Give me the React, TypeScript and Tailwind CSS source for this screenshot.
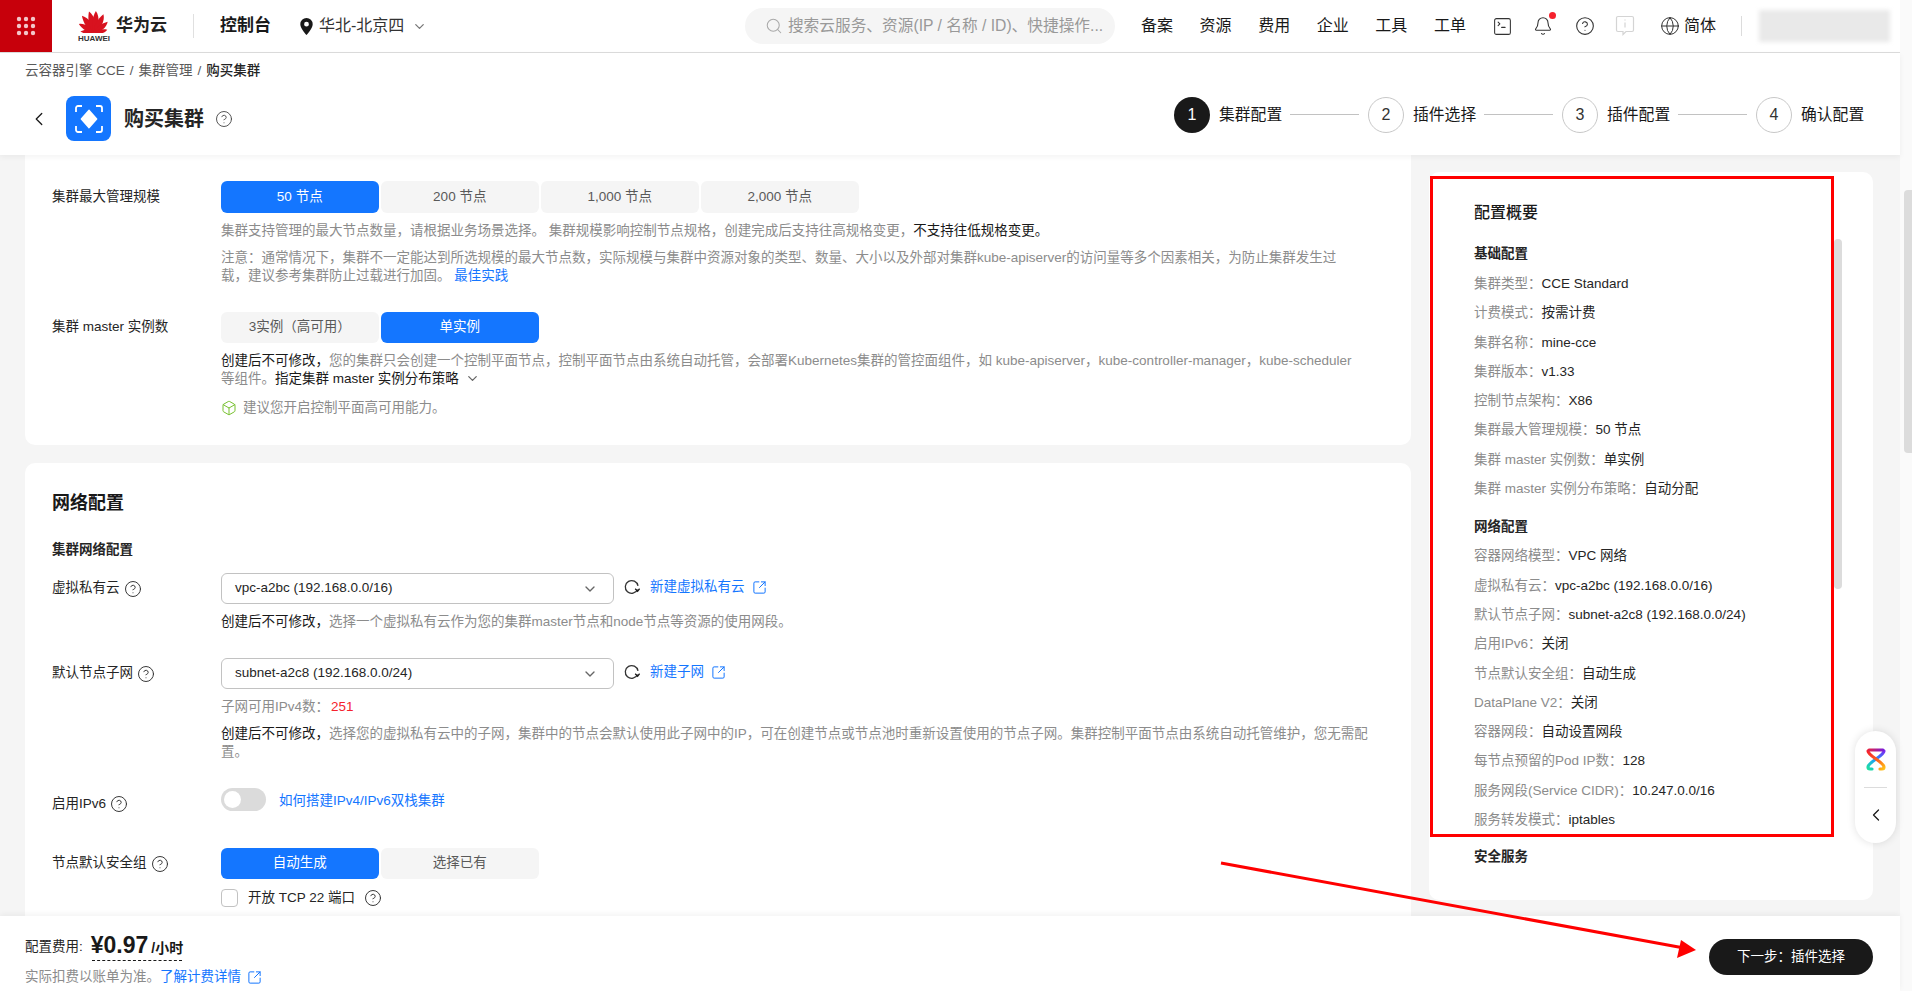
import { Bell, Box, ChevronDown, ChevronLeft, CircleHelp, Globe, Search, SquareArrowOutUpRight, SquareTerminal } from 'lucide-react';

const basicRows = [
    ['集群类型：', 'CCE Standard'],
    ['计费模式：', '按需计费'],
    ['集群名称：', 'mine-cce'],
    ['集群版本：', 'v1.33'],
    ['控制节点架构：', 'X86'],
    ['集群最大管理规模：', '50 节点'],
    ['集群 master 实例数：', '单实例'],
    ['集群 master 实例分布策略：', '自动分配'],
];

const networkRows = [
    ['容器网络模型：', 'VPC 网络'],
    ['虚拟私有云：', 'vpc-a2bc (192.168.0.0/16)'],
    ['默认节点子网：', 'subnet-a2c8 (192.168.0.0/24)'],
    ['启用IPv6：', '关闭'],
    ['节点默认安全组：', '自动生成'],
    ['DataPlane V2：', '关闭'],
    ['容器网段：', '自动设置网段'],
    ['每节点预留的Pod IP数：', '128'],
    ['服务网段(Service CIDR)：', '10.247.0.0/16'],
    ['服务转发模式：', 'iptables'],
];

const navItems = ['备案', '资源', '费用', '企业', '工具', '工单'];
const steps = ['集群配置', '插件选择', '插件配置', '确认配置'];

function HuaweiLogo() {
    const angles = [-80, -55, -31, -9, 9, 31, 55, 80];
    const lengths = [0.62, 0.8, 0.95, 1, 1, 0.95, 0.8, 0.62];
    return (
        <div className="flex w-[32px] flex-col items-center">
            <svg width="30" height="23" viewBox="-15 -23 30 23">
                {angles.map((a, i) => (
                    <path
                        key={a}
                        transform={`rotate(${a}) scale(${lengths[i]})`}
                        d="M0 0C-4.600-6-4.200-15-1.600-22C3.400-17 4.400-7 0 0Z"
                        fill="#d8121f"
                    />
                ))}
            </svg>
            <span className="mt-[1px] text-[8px] leading-[9px] font-semibold text-[#333]">HUAWEI</span>
        </div>
    );
}

function RefreshIcon() {
    return (
        <svg width="16" height="16" viewBox="0 0 16 16" fill="none" stroke="#191919" strokeWidth="1.3" className="shrink-0">
            <path d="M13.6 10.5A6.4 6.4 0 1 1 14 6.8" stroke="#333" />
            <path d="M11.2 9.8l2.4 2.4 2-2.6" />
        </svg>
    );
}

function Help({ className = '' }: { className?: string }) {
    return <CircleHelp size={18} strokeWidth={1.3} className={`shrink-0 text-[#333] ${className}`} />;
}

function Ext() {
    return <SquareArrowOutUpRight size={15} strokeWidth={1.6} className="shrink-0 text-[#1476ff]" />;
}

function Segments({ options, active, tall }: { options: string[]; active: number; tall?: boolean }) {
    return (
        <div className="flex gap-[2.5px]">
            {options.map((o, i) => (
                <div
                    key={o}
                    className={`flex w-[157.5px] items-center justify-center rounded-[6px] ${tall ? 'h-[32px]' : 'h-[31px]'} ${i === active ? 'bg-[#1476ff] text-white' : 'bg-[#f5f5f5] text-[#595959]'}`}
                >
                    {o}
                </div>
            ))}
        </div>
    );
}

function Label({ children, help, className = '' }: { children: React.ReactNode; help?: boolean; className?: string }) {
    return (
        <div className={`flex w-[169px] shrink-0 items-center text-[#252525] ${className}`}>
            <span>{children}</span>
            {help && <Help className="ml-[4px]" />}
        </div>
    );
}

function SelectBox({ value }: { value: string }) {
    return (
        <div className="flex h-[31px] w-[393px] items-center justify-between rounded-[6px] border border-[#c2c2c2] pr-[15px] pl-[13px] text-[#252525]">
            <span>{value}</span>
            <ChevronDown size={16} className="text-[#666]" />
        </div>
    );
}

function SummaryRow({ label, value }: { label: string; value: string }) {
    return (
        <div className="h-[29.3px] leading-[29.3px] whitespace-nowrap">
            <span className="text-[#8c8c8c]">{label}</span>
            <span className="text-[#252525]">{value}</span>
        </div>
    );
}

export default function App() {
    return (
        <div className="relative flex h-[991px] w-[1912px] overflow-hidden bg-white font-['Liberation_Sans','Noto_Sans_CJK_SC',sans-serif] text-[13.5px] text-[#191919]">
            <div className="flex w-[1900px] shrink-0 flex-col">
                {/* Top bar */}
                <div className="flex h-[53px] shrink-0 items-center border-b border-[#dcdcdc] bg-white">
                    <div className="flex h-[52px] w-[52px] shrink-0 items-center justify-center bg-[#c7000b]">
                        <svg width="20" height="20" viewBox="0 0 20 20" fill="#f3c6c9">
                            {[3, 10, 17].map((y) => [3, 10, 17].map((x) => <circle key={`${x}-${y}`} cx={x} cy={y} r="2.2" />))}
                        </svg>
                    </div>
                    <div className="ml-[26px]">
                        <HuaweiLogo />
                    </div>
                    <span className="ml-[6px] text-[17px] font-bold text-[#222]">华为云</span>
                    <div className="ml-[26px] h-[24px] w-px bg-[#e0e0e0]" />
                    <span className="ml-[26px] text-[17px] font-bold text-[#191919]">控制台</span>
                    <svg width="13" height="17" viewBox="0 0 13 17" className="ml-[29px] shrink-0">
                        <path fillRule="evenodd" d="M6.5 0A6.2 6.2 0 0 0 .3 6.2C.3 10.4 6.5 17 6.5 17s6.2-6.6 6.2-10.8A6.2 6.2 0 0 0 6.5 0Zm0 3.8a2.4 2.4 0 1 1 0 4.8 2.4 2.4 0 0 1 0-4.8Z" fill="#191919" />
                    </svg>
                    <span className="ml-[6px] text-[16px] text-[#333]">华北-北京四</span>
                    <ChevronDown size={15} className="ml-[8px] text-[#777]" />

                    <div className="ml-auto flex h-[36px] w-[370px] items-center overflow-hidden rounded-full bg-[#f5f5f5] pl-[20px] text-[15.7px] text-[#999]">
                        <Search size={18} strokeWidth={1.4} className="shrink-0 text-[#aaa]" />
                        <span className="ml-[5px] whitespace-nowrap">搜索云服务、资源(IP / 名称 / ID)、快捷操作...</span>
                    </div>
                    <div className="ml-[26px] flex gap-[26.6px] text-[16px] text-[#191919]">
                        {navItems.map((n) => (
                            <span key={n}>{n}</span>
                        ))}
                    </div>
                    <SquareTerminal size={21} strokeWidth={1.2} className="ml-[26px] text-[#333]" />
                    <div className="relative ml-[20px]">
                        <Bell size={20} strokeWidth={1.3} className="text-[#333]" />
                        <span className="absolute -top-[4px] -right-[3px] h-[7px] w-[7px] rounded-full bg-[#f5222d]" />
                    </div>
                    <CircleHelp size={20} strokeWidth={1.3} className="ml-[22px] text-[#333]" />
                    <svg width="20" height="22" viewBox="0 0 20 22" fill="none" stroke="#d4d4d4" strokeWidth="1.2" className="ml-[20px] shrink-0">
                        <path d="M3 1.5h14a1.5 1.5 0 0 1 1.5 1.5v12a1.5 1.5 0 0 1-1.5 1.5h-6l-3 3v-3H3A1.5 1.5 0 0 1 1.500 15V3A1.500 1.500 0 0 1 3 1.500Z" />
                        <path d="M10 7.500v5M10 4.500v1" />
                    </svg>
                    <Globe size={20} strokeWidth={1.2} className="ml-[25px] text-[#333]" />
                    <span className="ml-[4px] text-[16px] text-[#191919]">简体</span>
                    <div className="ml-[25px] h-[20px] w-px bg-[#dcdcdc]" />
                    <div className="mr-[10px] ml-[17px] h-[32px] w-[131px] bg-[#e9e9e9] blur-[2px]" />
                </div>

                {/* Page header */}
                <div className="relative z-10 h-[102px] shrink-0 bg-white shadow-[0_2px_6px_rgba(0,0,0,0.05)]">
                    <div className="pt-[8px] pl-[25px] leading-[20px] text-[#595959]">
                        云容器引擎 CCE<span className="mx-[5px]">/</span>集群管理<span className="mx-[5px]">/</span><span className="font-medium text-[#252525]">购买集群</span>
                    </div>
                    <div className="mt-[15px] flex h-[45px] items-center">
                        <ChevronLeft size={22} strokeWidth={1.4} className="ml-[28px] text-[#191919]" />
                        <div className="ml-[16px] flex h-[45px] w-[45px] items-center justify-center rounded-[8px] bg-[#1476ff]">
                            <svg width="30" height="30" viewBox="0 0 30 30" fill="none" stroke="#fff" strokeWidth="1.8">
                                <path d="M2 8V4a2 2 0 0 1 2-2h4M22 2h4a2 2 0 0 1 2 2v4M28 22v4a2 2 0 0 1-2 2h-4M8 28H4a2 2 0 0 1-2-2v-4" />
                                <path d="M15 6.500L22.500 15 15 23.500 7.500 15Z" fill="#fff" stroke="#fff" strokeLinejoin="round" />
                            </svg>
                        </div>
                        <span className="ml-[13px] text-[20px] font-bold text-[#252525]">购买集群</span>
                        <CircleHelp size={18} strokeWidth={1.2} className="ml-[11px] text-[#444]" />
                        <div className="mr-[36px] -mt-[8px] ml-auto flex items-center">
                            {steps.map((s, i) => (
                                <div key={s} className="flex items-center">
                                    <div className={`flex h-[36px] w-[36px] items-center justify-center rounded-full text-[16px] ${i === 0 ? 'bg-[#191919] text-white' : 'border border-[#c8c8c8] text-[#333]'}`}>
                                        {i + 1}
                                    </div>
                                    <span className="ml-[9px] w-[63px] text-[15.8px] whitespace-nowrap text-[#191919]">{s}</span>
                                    {i < 3 && <div className="mr-[9px] ml-[8px] h-px w-[69px] bg-[#c2c2c2]" />}
                                </div>
                            ))}
                        </div>
                    </div>
                </div>

                {/* Body */}
                <div className="flex min-h-0 flex-1 overflow-hidden bg-[#f5f5f5] pl-[25px]">
                    <div className="w-[1386px] shrink-0">
                        <div className="rounded-b-[10px] bg-white pt-[26px] pb-[28px] pl-[27px]">
                            <div className="flex">
                                <Label className="h-[32px]">集群最大管理规模</Label>
                                <div className="min-w-0">
                                    <Segments options={['50 节点', '200 节点', '1,000 节点', '2,000 节点']} active={0} tall />
                                    <p className="mt-[9px] leading-[18px] whitespace-nowrap text-[#8c8c8c]">
                                        集群支持管理的最大节点数量，请根据业务场景选择。 集群规模影响控制节点规格，创建完成后支持往高规格变更，<span className="text-[#191919]">不支持往低规格变更。</span>
                                    </p>
                                    <p className="mt-[9px] leading-[18px] whitespace-nowrap text-[#8c8c8c]">
                                        注意：通常情况下，集群不一定能达到所选规模的最大节点数，实际规模与集群中资源对象的类型、数量、大小以及外部对集群kube-apiserver的访问量等多个因素相关，为防止集群发生过
                                        <br />
                                        载，建议参考集群防止过载进行加固。 <span className="text-[#1476ff]">最佳实践</span>
                                    </p>
                                </div>
                            </div>
                            <div className="mt-[27px] flex">
                                <Label className="h-[31px]">集群 master 实例数</Label>
                                <div>
                                    <Segments options={['3实例（高可用）', '单实例']} active={1} />
                                    <p className="mt-[9px] leading-[18px] whitespace-nowrap text-[#8c8c8c]">
                                        <span className="text-[#191919]">创建后不可修改，</span>您的集群只会创建一个控制平面节点，控制平面节点由系统自动托管，会部署Kubernetes集群的管控面组件，如 kube-apiserver，kube-controller-manager，kube-scheduler
                                        <br />
                                        等组件。<span className="text-[#191919]">指定集群 master 实例分布策略</span>
                                        <ChevronDown size={15} className="ml-[6px] inline align-[-3px] text-[#666]" />
                                    </p>
                                    <div className="mt-[11px] flex h-[18px] items-center text-[#8c8c8c]">
                                        <Box size={16} strokeWidth={1.4} className="text-[#6dbb1f]" />
                                        <span className="ml-[6px]">建议您开启控制平面高可用能力。</span>
                                    </div>
                                </div>
                            </div>
                        </div>

                        <div className="mt-[18px] rounded-t-[10px] bg-white pt-[28px] pb-[60px] pl-[27px]">
                            <h2 className="text-[18px] leading-[24px] font-bold text-[#191919]">网络配置</h2>
                            <h3 className="mt-[25px] leading-[20px] font-bold text-[#252525]">集群网络配置</h3>
                            <div className="mt-[13px] flex">
                                <Label help className="h-[31px]">虚拟私有云</Label>
                                <div>
                                    <div className="flex items-center">
                                        <SelectBox value="vpc-a2bc (192.168.0.0/16)" />
                                        <div className="-mt-[3px] ml-[10px] flex items-center text-[#1476ff]">
                                            <RefreshIcon />
                                            <span className="mr-[7px] ml-[10px]">新建虚拟私有云</span>
                                            <Ext />
                                        </div>
                                    </div>
                                    <p className="mt-[9px] leading-[18px] text-[#8c8c8c]">
                                        <span className="text-[#191919]">创建后不可修改，</span>选择一个虚拟私有云作为您的集群master节点和node节点等资源的使用网段。
                                    </p>
                                </div>
                            </div>
                            <div className="mt-[27px] flex">
                                <Label help className="h-[31px]">默认节点子网</Label>
                                <div>
                                    <div className="flex items-center">
                                        <SelectBox value="subnet-a2c8 (192.168.0.0/24)" />
                                        <div className="-mt-[3px] ml-[10px] flex items-center text-[#1476ff]">
                                            <RefreshIcon />
                                            <span className="mr-[7px] ml-[10px]">新建子网</span>
                                            <Ext />
                                        </div>
                                    </div>
                                    <p className="mt-[9px] leading-[18px] text-[#8c8c8c]">
                                        子网可用IPv4数：<span className="ml-[2px] text-[#f5222d]">251</span>
                                    </p>
                                    <p className="mt-[9px] leading-[18px] whitespace-nowrap text-[#8c8c8c]">
                                        <span className="text-[#191919]">创建后不可修改，</span>选择您的虚拟私有云中的子网，集群中的节点会默认使用此子网中的IP，可在创建节点或节点池时重新设置使用的节点子网。集群控制平面节点由系统自动托管维护，您无需配
                                        <br />
                                        置。
                                    </p>
                                </div>
                            </div>
                            <div className="mt-[27px] flex">
                                <Label help className="mt-[7px] h-[18px]">启用IPv6</Label>
                                <div className="flex items-start">
                                    <div className="flex h-[23px] w-[45px] items-center rounded-full bg-[#dbdbdb] pl-[3px]">
                                        <div className="h-[17px] w-[17px] rounded-full bg-white" />
                                    </div>
                                    <span className="mt-[3px] ml-[13px] text-[#1476ff]">如何搭建IPv4/IPv6双栈集群</span>
                                </div>
                            </div>
                            <div className="mt-[35px] flex">
                                <Label help className="h-[31px]">节点默认安全组</Label>
                                <div>
                                    <Segments options={['自动生成', '选择已有']} active={0} />
                                    <div className="mt-[10px] flex h-[18px] items-center text-[#252525]">
                                        <div className="h-[18px] w-[17px] rounded-[4px] border border-[#c2c2c2] bg-white" />
                                        <span className="ml-[10px]">开放 TCP 22 端口</span>
                                        <Help className="ml-[9px]" />
                                    </div>
                                </div>
                            </div>
                        </div>
                    </div>

                    {/* Config summary */}
                    <div className="relative mt-[17px] ml-[18px] h-[728px] w-[444px] shrink-0 overflow-hidden rounded-[10px] bg-white pt-[29px] pl-[45px]">
                        <div className="text-[16px] leading-[24px] font-medium text-[#191919]">配置概要</div>
                        <div className="mt-[19px] leading-[20px] font-bold text-[#252525]">基础配置</div>
                        <div className="mt-[5px]">
                            {basicRows.map(([k, v]) => (
                                <SummaryRow key={k} label={k} value={v} />
                            ))}
                        </div>
                        <div className="mt-[14px] leading-[20px] font-bold text-[#252525]">网络配置</div>
                        <div className="mt-[4px]">
                            {networkRows.map(([k, v]) => (
                                <SummaryRow key={k} label={k} value={v} />
                            ))}
                        </div>
                        <div className="mt-[13px] leading-[20px] font-bold text-[#252525]">安全服务</div>
                        <div className="absolute top-[67px] right-[31px] h-[350px] w-[8px] rounded-[4px] bg-[#dcdcdc]" />
                    </div>
                </div>

                {/* Footer */}
                <div className="relative z-10 flex h-[75px] shrink-0 bg-white pl-[25px] shadow-[0_-2px_6px_rgba(0,0,0,0.05)]">
                    <div className="pt-[15px]">
                        <div className="flex items-end">
                            <span className="mb-[3px] leading-[20px] text-[#252525]">配置费用:</span>
                            <div className="ml-[8px] flex h-[29px] items-baseline font-bold text-[#191919]">
                                <span className="text-[23px] leading-[29px]">¥0.97</span>
                                <span className="ml-[3px] text-[14px]">/小时</span>
                            </div>
                        </div>
                        <div className="ml-[67px] h-[1px] w-[90px] border-t border-dashed border-[#191919]" />
                        <div className="mt-[7px] flex items-center leading-[18px] text-[#8c8c8c]">
                            实际扣费以账单为准。<span className="text-[#1476ff]">了解计费详情</span>
                            <span className="ml-[6px]">
                                <Ext />
                            </span>
                        </div>
                    </div>
                    <div className="mt-[23px] mr-[27px] ml-auto flex h-[36px] w-[164px] items-center justify-center rounded-full bg-[#191919] text-white">
                        下一步：插件选择
                    </div>
                </div>
            </div>

            {/* Page scrollbar */}
            <div className="w-[12px] shrink-0 bg-[#fafafa] pt-[190px] pl-[4px]">
                <div className="h-[263px] w-[8px] rounded-l-[4px] bg-[#dcdcdc]" />
            </div>

            {/* Floating helper */}
            <div className="absolute top-[731px] left-[1855px] z-20 flex h-[112px] w-[41px] flex-col items-center rounded-full bg-white shadow-[0_0_8px_rgba(0,0,0,0.12)]">
                <svg width="20" height="23" viewBox="0 0 20 23" fill="none" strokeWidth="3.2" strokeLinecap="round" className="mt-[17px]">
                    <defs>
                        <linearGradient id="topStroke" x1="0" y1="0" x2="20" y2="0" gradientUnits="userSpaceOnUse">
                            <stop offset="0" stopColor="#f5222d" />
                            <stop offset="1" stopColor="#6a1bf0" />
                        </linearGradient>
                        <linearGradient id="leftStroke" x1="18" y1="3" x2="2" y2="21" gradientUnits="userSpaceOnUse">
                            <stop offset="0" stopColor="#7a2bf0" />
                            <stop offset="0.5" stopColor="#1e9bff" />
                            <stop offset="1" stopColor="#1ee0a0" />
                        </linearGradient>
                        <linearGradient id="rightStroke" x1="2" y1="3" x2="18" y2="21" gradientUnits="userSpaceOnUse">
                            <stop offset="0" stopColor="#f5222d" />
                            <stop offset="0.6" stopColor="#ff6a1a" />
                            <stop offset="1" stopColor="#ffc21a" />
                        </linearGradient>
                    </defs>
                    <path d="M18 3C18 8 2 14 2 19c0 1 .8 2 2 2h2" stroke="url(#leftStroke)" />
                    <path d="M2 3C2 8 18 14 18 19c0 1-.8 2-2 2h-2" stroke="url(#rightStroke)" />
                    <path d="M3 2h14" stroke="url(#topStroke)" />
                </svg>
                <div className="mt-[16px] h-px w-[23px] bg-[#dcdcdc]" />
                <ChevronLeft size={20} strokeWidth={1.5} className="mt-[17px] text-[#191919]" />
            </div>

            {/* Annotation: red frame */}
            <div className="pointer-events-none absolute top-[176px] left-[1430px] z-20 h-[661px] w-[404px] border-[3px] border-[#ff0000]" />

            {/* Annotation: red arrow */}
            <svg width="1912" height="991" viewBox="0 0 1912 991" className="pointer-events-none absolute top-0 left-0 z-30">
                <line x1="1221" y1="863" x2="1684" y2="948" stroke="#ff0000" strokeWidth="3" />
                <polygon points="1696,950 1681,940 1677,958" fill="#ff0000" />
            </svg>
        </div>
    );
}
